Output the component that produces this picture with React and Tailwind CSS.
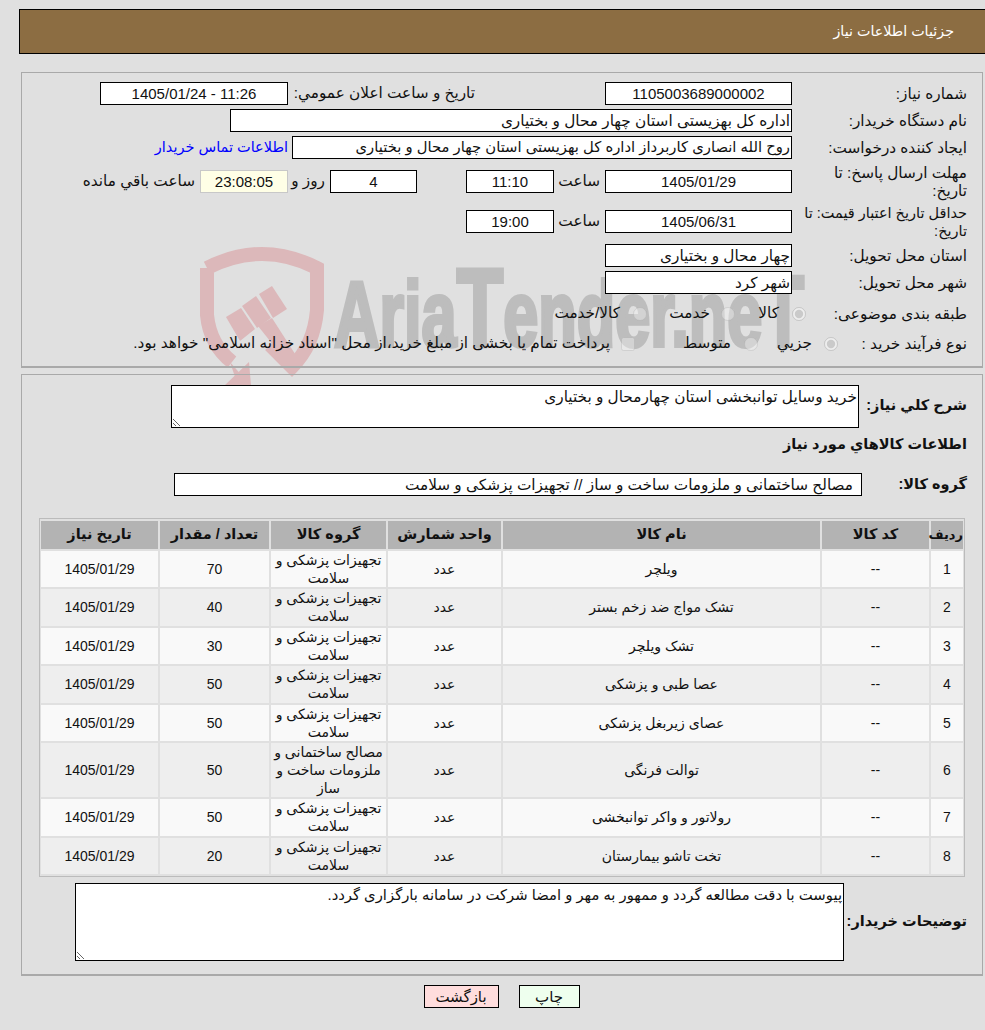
import React from "react";

const font = { fontFamily: '"Liberation Sans", "DejaVu Sans", sans-serif' };

// Read-only value box
const Box = ({ w, center, className = "", children }) => (
  <div
    className={`h-[23px] shrink-0 bg-white border border-black flex items-center leading-none overflow-hidden whitespace-nowrap ${w} ${
      center ? "justify-center text-[15px]" : "px-px"
    } ${className}`}
  >
    {children}
  </div>
);

const Label = ({ children, w = "w-[175px]", className = "" }) => (
  <div className={`${w} shrink-0 pl-1 leading-[18px] whitespace-nowrap ${className}`}>{children}</div>
);

// Watermark behind the form
const Watermark = () => (
  <svg
    className="absolute left-0 top-0 pointer-events-none"
    width="985"
    height="385"
    viewBox="0 0 985 385"
  >
    <path
      d="M207 268 Q262 240 317 268 L317 310 Q314 345 292 367 L270 345 M207 268 L207 315 Q210 345 232 362"
      fill="none"
      stroke="#dcb8ba"
      strokeWidth="14"
    />
    <path d="M225 385 L249 362 L251 385 Z M230 362 L256 392 L240 392 Z" fill="#dcb8ba" />
    <path d="M226 317 L241 308 L255 329 L240 341 Z" fill="#dcb8ba" />
    <path d="M242 306 L256 296 L271 318 L257 328 Z" fill="#dcb8ba" />
    <path d="M259 294 L272 286 L287 309 L273 318 Z" fill="#dcb8ba" />
    <path d="M258 326 L272 318 L297 357 L290 366 Z" fill="#dcb8ba" />
    <text
      x="334"
      y="346"
      textLength="470"
      lengthAdjust="spacingAndGlyphs"
      fontSize="92"
      fontWeight="700"
      fill="#bdbdbd"
      stroke="#bdbdbd"
      strokeWidth="4"
      direction="ltr"
      style={{ fontFamily: '"Liberation Sans", sans-serif' }}
    >
      Aria<tspan fontSize="112">T</tspan>ender.ne<tspan fontSize="100">T</tspan>
    </text>
  </svg>
);

const TopPanel = () => (
  <section className="relative ml-[21px] mr-[2px] mt-[18px] h-[296px] border border-[#a9a9a9] border-b-2 pr-[15px] pt-[9px] text-[15.3px] text-[#111]">
    <div className="flex items-center h-[23px]">
      <Label>شماره نیاز:</Label>
      <Box w="w-[187px]" center>1105003689000002</Box>
      <div className="w-[317px] shrink-0 pr-[130px] whitespace-nowrap">تاریخ و ساعت اعلان عمومي:</div>
      <Box w="w-[188px]" center><span dir="ltr">1405/01/24 - 11:26</span></Box>
    </div>
    <div className="flex items-center h-[23px] mt-[4px]">
      <Label>نام دستگاه خریدار:</Label>
      <Box w="w-[562px]">اداره کل بهزیستی استان چهار محال و بختیاری</Box>
    </div>
    <div className="flex items-center h-[23px] mt-[4px]">
      <Label>ایجاد کننده درخواست:</Label>
      <Box w="w-[500px]" className="text-[14.8px]">روح الله انصاری کاربرداز اداره کل بهزیستی استان چهار محال و بختیاری</Box>
      <a href="#" className="mr-[4px] text-[14.5px] text-[#0000ff]">اطلاعات تماس خریدار</a>
    </div>
    <div className="flex items-center h-[37px] mt-[4px]">
      <Label>مهلت ارسال پاسخ: تا<br />تاریخ:</Label>
      <Box w="w-[187px]" center>1405/01/29</Box>
      <div className="w-[51px] shrink-0 pr-[5px]">ساعت</div>
      <Box w="w-[88px]" center>11:10</Box>
      <Box w="w-[87px]" center className="mr-[49px]">4</Box>
      <div className="w-[42px] shrink-0 pr-[5px]">روز و</div>
      <Box w="w-[88px]" center className="!bg-[#ffffe6] !border-[#c8c8c8]">23:08:05</Box>
      <div className="pr-[5px] whitespace-nowrap">ساعت باقي مانده</div>
    </div>
    <div className="flex items-center h-[35px] mt-[4px]">
      <Label className="text-[14.5px]">حداقل تاریخ اعتبار قیمت: تا<br />تاریخ:</Label>
      <Box w="w-[187px]" center>1405/06/31</Box>
      <div className="w-[51px] shrink-0 pr-[5px]">ساعت</div>
      <Box w="w-[88px]" center>19:00</Box>
    </div>
    <div className="flex items-center h-[23px] mt-[5px]">
      <Label>استان محل تحویل:</Label>
      <Box w="w-[187px]">چهار محال و بختیاری</Box>
    </div>
    <div className="flex items-center h-[23px] mt-[4px]">
      <Label>شهر محل تحویل:</Label>
      <Box w="w-[187px]">شهر کرد</Box>
    </div>
    <div className="flex items-center h-[23px] mt-[8px]">
      <Label w="w-[161px]">طبقه بندی موضوعی:</Label>
      <input type="radio" disabled defaultChecked name="kind" className="w-[14px] h-[14px] m-0 shrink-0" />
      <div className="w-[57px] shrink-0 pr-[13px]">کالا</div>
      <input type="radio" disabled name="kind" className="w-[14px] h-[14px] m-0 shrink-0 opacity-60" />
      <div className="w-[74px] shrink-0 pr-[11px]">خدمت</div>
      <input type="radio" disabled name="kind" className="w-[14px] h-[14px] m-0 shrink-0 opacity-60" />
      <div className="pr-[13px]">کالا/خدمت</div>
    </div>
    <div className="flex items-center h-[23px] mt-[7px]">
      <div className="w-[129px] shrink-0 leading-[18px]">نوع فرآیند خرید :</div>
      <input type="radio" disabled defaultChecked name="proc" className="w-[14px] h-[14px] m-0 shrink-0" />
      <div className="w-[66px] shrink-0 pr-[12px]">جزیي</div>
      <input type="radio" disabled name="proc" className="w-[14px] h-[14px] m-0 shrink-0 opacity-60" />
      <div className="w-[109px] shrink-0 pr-[13px]">متوسط</div>
      <input type="checkbox" disabled className="w-[14px] h-[14px] m-0 shrink-0 opacity-60" />
      <div className="pr-[11px] whitespace-nowrap">پرداخت تمام یا بخشی از مبلغ خرید،از محل "اسناد خزانه اسلامی" خواهد بود.</div>
    </div>
  </section>
);

const rows = [
  ["1", "ویلچر", "تجهیزات پزشکی و سلامت", "70"],
  ["2", "تشک مواج ضد زخم بستر", "تجهیزات پزشکی و سلامت", "40"],
  ["3", "تشک ویلچر", "تجهیزات پزشکی و سلامت", "30"],
  ["4", "عصا طبی و پزشکی", "تجهیزات پزشکی و سلامت", "50"],
  ["5", "عصای زیربغل پزشکی", "تجهیزات پزشکی و سلامت", "50"],
  ["6", "توالت فرنگی", "مصالح ساختمانی و ملزومات ساخت و ساز", "50"],
  ["7", "رولاتور و واکر توانبخشی", "تجهیزات پزشکی و سلامت", "50"],
  ["8", "تخت تاشو بیمارستان", "تجهیزات پزشکی و سلامت", "20"],
];

const ItemsTable = () => (
  <div className="mr-[17px] mt-[21.5px] w-[926px] border border-[#bbb]">
    <table className="w-[926px] -mx-px table-fixed border-separate border-spacing-[2px] text-[14px] text-center text-[#111]">
      <colgroup>
        <col className="w-[32px]" />
        <col className="w-[107px]" />
        <col className="w-[317px]" />
        <col className="w-[113px]" />
        <col className="w-[115px]" />
        <col className="w-[109px]" />
        <col />
      </colgroup>
      <thead>
        <tr className="h-[28px] bg-[#b3b3b3] font-bold text-[14.5px]">
          <th className="text-[13px]">ردیف</th>
          <th>کد کالا</th>
          <th>نام کالا</th>
          <th>واحد شمارش</th>
          <th>گروه کالا</th>
          <th>تعداد / مقدار</th>
          <th>تاریخ نیاز</th>
        </tr>
      </thead>
      <tbody>
        {rows.map((row, i) => (
          <tr key={row[0]} className={`h-[36.5px] leading-[18px] ${i % 2 ? "bg-[#eeeeee]" : "bg-[#f9f9f9]"}`}>
            <td>{row[0]}</td>
            <td>--</td>
            <td>{row[1]}</td>
            <td>عدد</td>
            <td className="px-px">{row[2]}</td>
            <td>{row[3]}</td>
            <td>1405/01/29</td>
          </tr>
        ))}
      </tbody>
    </table>
  </div>
);

const ItemsPanel = () => (
  <section className="relative ml-[21px] mr-[2px] mt-[6px] h-[602px] border border-[#a9a9a9] border-b-2 pt-[9px] text-[15.3px] text-[#111]">
    <div className="flex items-center pr-[15px] h-[44px]">
      <div className="w-[108px] shrink-0 font-bold text-[14.5px] whitespace-nowrap">شرح کلي نیاز:</div>
      <textarea
        readOnly
        dir="rtl"
        defaultValue="خرید وسایل توانبخشی استان چهارمحال و بختیاری"
        className="w-[688px] h-[43px] border border-black bg-white px-px resize outline-none"
      />
    </div>
    <div className="pr-[15px] mt-[4px] h-[24px] leading-[24px] font-bold text-[14.5px]">اطلاعات کالاهاي مورد نیاز</div>
    <div className="flex items-center pr-[15px] mt-[17px] h-[23px]">
      <div className="w-[105px] shrink-0 font-bold text-[14.5px] whitespace-nowrap">گروه کالا:</div>
      <Box w="w-[688px]" className="pr-2">مصالح ساختمانی و ملزومات ساخت و ساز // تجهیزات پزشکی و سلامت</Box>
    </div>
    <ItemsTable />
    <div className="flex items-center pr-[15px] mt-[6px] h-[78px]">
      <div className="w-[123px] shrink-0 font-bold text-[14.5px] whitespace-nowrap">توضیحات خریدار:</div>
      <textarea
        readOnly
        dir="rtl"
        defaultValue="پیوست با دقت مطالعه گردد و ممهور به مهر و امضا شرکت در سامانه بارگزاری گردد."
        className="w-[769px] h-[78px] border border-black bg-white px-px resize outline-none text-[14.8px]"
      />
    </div>
  </section>
);

export default function App() {
  return (
    <div dir="rtl" style={font} className="relative h-[1030px] w-[985px] overflow-hidden bg-[#e0e0e0]">
      <Watermark />
      <header className="relative ml-[19px] mt-[9px] h-[45px] border border-black border-r-0 bg-[#8c6d42] flex items-center pr-[31px] text-[14.3px] text-white">
        جزئیات اطلاعات نیاز
      </header>
      <TopPanel />
      <ItemsPanel />
      <div className="relative mt-[9px] flex justify-center gap-[20px] pl-[18px] text-[15px] text-[#111]">
        <button className="w-[61px] h-[23px] border border-black bg-[#eeffee]">چاپ</button>
        <button className="w-[75px] h-[23px] border border-black bg-[#ffdddd]">بازگشت</button>
      </div>
    </div>
  );
}
